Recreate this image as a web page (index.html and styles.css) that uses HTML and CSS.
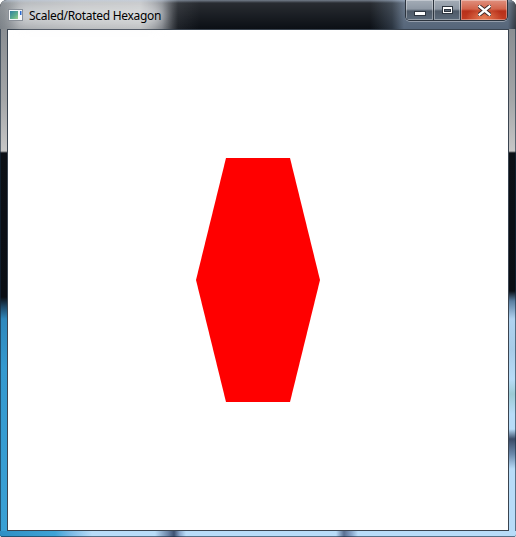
FILE: index.html
```html
<!DOCTYPE html>
<html>
<head>
<meta charset="utf-8">
<title>Scaled/Rotated Hexagon</title>
<link rel="stylesheet" href="styles.css">
</head>
<body>
<div class="window">
  <div class="titlebar">
    <div class="title-left">
      <svg class="app-icon" width="15" height="12" viewBox="0 0 15 12">
        <rect x="0.5" y="0.5" width="14" height="11" fill="#f4f6f8" stroke="#8a9098"/>
        <defs>
          <linearGradient id="ig" x1="0" y1="0" x2="1" y2="1">
            <stop offset="0" stop-color="#2f7fa0"/>
            <stop offset="0.6" stop-color="#5fae8c"/>
            <stop offset="1" stop-color="#9ccf8a"/>
          </linearGradient>
        </defs>
        <rect x="2" y="2" width="8" height="8" fill="url(#ig)"/>
        <rect x="12" y="2" width="1.5" height="4" fill="#2a6ad0"/>
      </svg>
      <span class="title-text">Scaled/Rotated Hexagon</span>
    </div>
    <div class="caption-buttons">
      <div class="cbtn cbtn-min"><span class="glyph-min"></span></div>
      <div class="cbtn cbtn-max"><span class="glyph-max"></span></div>
      <div class="cbtn cbtn-close">
        <svg width="13" height="11" viewBox="0 0 13 11">
          <path d="M1.5 1.5 L11.5 9.5 M11.5 1.5 L1.5 9.5" stroke="#3a2a28" stroke-width="4.2" stroke-linecap="square"/>
          <path d="M1.5 1.5 L11.5 9.5 M11.5 1.5 L1.5 9.5" stroke="#ffffff" stroke-width="2.4" stroke-linecap="square"/>
        </svg>
      </div>
    </div>
  </div>
  <div class="middle">
    <div class="side side-left"></div>
    <div class="client">
      <svg class="canvas" width="500" height="500" viewBox="0 0 500 500">
        <polygon points="218,128 282,128 312,250 282,372 218,372 188,250" fill="#ff0000"/>
      </svg>
    </div>
    <div class="side side-right"></div>
  </div>
  <div class="bottom"></div>
</div>
</body>
</html>
```

FILE: styles.css
```css
html, body {
  margin: 0;
  padding: 0;
  background: #ffffff;
}

.window {
  width: 516px;
  height: 537px;
  box-sizing: border-box;
  display: flex;
  flex-direction: column;
  border-radius: 7px 7px 3px 3px;
  overflow: hidden;
  box-shadow: inset 0 0 0 1px rgba(20, 30, 40, 0.55);
  background: #0b0f15;
}

.titlebar {
  height: 29px;
  display: flex;
  justify-content: space-between;
  align-items: flex-start;
  background:
    linear-gradient(to bottom, rgba(200, 215, 235, 0.55) 0, rgba(255, 255, 255, 0.12) 3px, rgba(255, 255, 255, 0) 29px),
    linear-gradient(to right, #7c8288 0, #9ea2a6 20px, #b2b4b6 80px, #b8babc 140px, #7a7e84 162px, #1c2026 178px, #0b0f15 200px, #0b0f15 370px, #2a3440 392px, #56667a 404px, #56667a 508px, #30363e 516px);
}

.title-left {
  display: flex;
  align-items: center;
  height: 29px;
  padding-left: 8px;
  position: relative;
}

.title-left::before {
  content: "";
  position: absolute;
  left: 14px;
  top: 4px;
  width: 150px;
  height: 22px;
  border-radius: 11px;
  background: rgba(235, 236, 238, 0.55);
  filter: blur(6px);
}

.app-icon {
  position: relative;
  margin-top: 1px;
}

.title-text {
  position: relative;
  margin-left: 6px;
  margin-top: 1px;
  font-family: "Noto Sans", "Open Sans", sans-serif;
  font-size: 12px;
  color: #000000;
  letter-spacing: -0.3px;
}

.caption-buttons {
  display: flex;
  margin-right: 8px;
  height: 20px;
  border: 1px solid #2c343e;
  border-top: none;
  border-radius: 0 0 5px 5px;
  overflow: hidden;
  box-shadow: 0 1px 0 rgba(255, 255, 255, 0.35);
}

.cbtn {
  height: 20px;
  display: flex;
  align-items: center;
  justify-content: center;
  box-sizing: border-box;
  box-shadow: inset 0 0 0 1px rgba(255, 255, 255, 0.35);
}

.cbtn-min {
  width: 28px;
  border-right: 1px solid #2c343e;
  background: linear-gradient(to bottom, #a3acb6 0, #8e98a4 45%, #4e5a68 55%, #5c6a7a 100%);
}

.cbtn-max {
  width: 27px;
  border-right: 1px solid #2c343e;
  background: linear-gradient(to bottom, #a3acb6 0, #8e98a4 45%, #4e5a68 55%, #5c6a7a 100%);
}

.cbtn-close {
  width: 46px;
  background:
    radial-gradient(ellipse 40% 60% at 50% 90%, rgba(255, 170, 120, 0.6), rgba(255, 170, 120, 0) 100%),
    linear-gradient(to bottom, #e0907e 0, #d2644c 45%, #b8301a 55%, #c23c22 100%);
}

.glyph-min {
  display: block;
  width: 10px;
  height: 3px;
  margin-top: 6px;
  background: #ffffff;
  border: 1px solid #2e3640;
}

.glyph-max {
  display: block;
  width: 7px;
  height: 3px;
  margin-top: -1px;
  border: 1px solid #ffffff;
  border-top-width: 2px;
  outline: 1px solid #2e3640;
  box-shadow: inset 0 0 0 1px #2e3640;
}

.middle {
  flex: 1;
  display: flex;
}

.side {
  width: 7px;
}

.side-left {
  background: linear-gradient(to bottom, #8a8e92 0, #a4a6a8 70px, #c6c6c6 122px, #0c1016 124px, #0a0e14 268px, #1e4a6a 278px, #2e88bc 290px, #3499cf 340px, #3aa0d4 100%);
  box-shadow: inset 1px 0 0 rgba(20, 40, 60, 0.6);
}

.side-right {
  background: linear-gradient(to bottom, #8a8e92 0, #a4a6a8 70px, #c6c6c6 122px, #0c1016 124px, #0a0e14 262px, #5a7ea0 272px, #b0d2f0 290px, #a8cce8 320px, #b8dcf8 350px, #9ccad4 365px, #b8dcf8 385px, #b8dcf8 400px, #3a4a66 410px, #6a88aa 425px, #b8dcf8 440px, #b8dcf8 100%);
  box-shadow: inset -1px 0 0 rgba(20, 40, 60, 0.6);
}

.client {
  width: 500px;
  height: 500px;
  background: #ffffff;
  border: 1px solid #3a4450;
  flex: none;
}

.canvas {
  display: block;
}

.bottom {
  height: 6px;
  background: linear-gradient(to right, #2f8fc4 0, #3ea3d6 55px, #78b8e4 70px, #b8dcf8 92px, #b8dcf8 155px, #6a84a6 168px, #3e5272 174px, #8aa8cc 180px, #b8dcf8 186px, #b8dcf8 336px, #5a7092 344px, #8aa8cc 352px, #b8dcf8 358px, #b8dcf8 100%);
  box-shadow: inset 0 -1px 0 rgba(20, 40, 60, 0.6);
}
```
